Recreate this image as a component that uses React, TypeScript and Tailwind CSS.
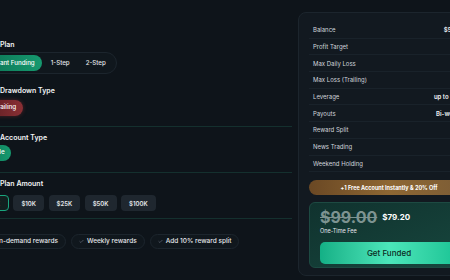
import { Check } from 'lucide-react';

const tabs = ['Instant Funding', '1-Step', '2-Step'];
const amounts = ['$5K', '$10K', '$25K', '$50K', '$100K'];
const rewards = ['On-demand rewards', 'Weekly rewards', 'Add 10% reward split'];

const specs: [string, string][] = [
  ['Balance', '$5,000'],
  ['Profit Target', '8%'],
  ['Max Daily Loss', '4%'],
  ['Max Loss (Trailing)', '6%'],
  ['Leverage', 'up to 1:100'],
  ['Payouts', 'Bi-weekly'],
  ['Reward Split', '80%'],
  ['News Trading', 'Yes'],
  ['Weekend Holding', 'Yes'],
];

const Label = ({ children, className = '' }: { children: string; className?: string }) => (
  <div className={`text-[7px] font-semibold leading-[14px] text-gray-100 ${className}`}>{children}</div>
);

const Divider = ({ className = '' }: { className?: string }) => (
  <div className={`h-px w-[292px] bg-[#14302e] ${className}`} />
);

const App = () => (
  <div className="flex h-[280px] w-[450px] overflow-hidden bg-[#0e141a] font-['Inter',sans-serif]">
    <div className="flex w-[298px] shrink-0 flex-col pt-[38px]">
      <Label>Plan</Label>
      <div className="ml-[-22px] flex h-[22px] w-fit items-center gap-[2px] rounded-full border border-[#1c252d] bg-[#10171d] p-[3px]">
        {tabs.map((t, i) => (
          <div
            key={t}
            className={`flex h-[16px] items-center rounded-full px-[7px] text-[6.2px] font-medium ${
              i === 0 ? 'bg-gradient-to-r from-[#0c7454] to-[#16996f] text-white' : 'text-gray-200'
            }`}
          >
            {t}
          </div>
        ))}
      </div>

      <Label className="mt-[10px]">Drawdown Type</Label>
      <div className="ml-[-13px] mt-[2px] flex h-[16px] w-fit items-center rounded-full bg-gradient-to-r from-[#5e1f23] to-[#8b2f34] px-[7px] text-[6.3px] font-medium text-white shadow-[0_0_4px_rgba(200,60,60,0.35)]">
        Trailing
      </div>

      <Divider className="mt-[10px]" />
      <Label className="mt-[4px]">Account Type</Label>
      <div className="ml-[-20px] flex h-[16px] w-fit items-center rounded-full bg-gradient-to-r from-[#0c7454] to-[#16996f] px-[6px] text-[6.3px] font-medium text-white">
        Single
      </div>

      <Divider className="mt-[11px]" />
      <Label className="mt-[4px]">Plan Amount</Label>
      <div className="ml-[-21px] mt-[4px] flex gap-[4.5px]">
        {amounts.map((a, i) => (
          <div
            key={a}
            className={`flex h-[16px] items-center rounded-[4px] px-[8px] text-[6px] font-semibold ${
              i === 0 ? 'border border-[#1aa57d] bg-[#12201f] text-white' : 'bg-[#1f272f] text-gray-200'
            }`}
          >
            {a}
          </div>
        ))}
      </div>

      <Divider className="mt-[7px]" />
      <div className="ml-[-22px] mt-[15px] flex gap-[5px]">
        {rewards.map((r) => (
          <div
            key={r}
            className="flex h-[15px] items-center gap-[3px] rounded-full border border-[#1c252d] bg-[#10171d] pl-[7px] pr-[7px] text-[6.5px] font-medium text-gray-200"
          >
            <Check className="h-[5px] w-[5px] text-gray-500" strokeWidth={3} />
            {r}
          </div>
        ))}
      </div>
    </div>

    <div className="mt-[12px] flex h-[264px] w-[182px] shrink-0 flex-col rounded-[8px] border border-[#1c252d] bg-[#121920] px-[10px] pt-[9px]">
      {specs.map(([k, v]) => (
        <div key={k} className="flex h-[16.7px] items-center justify-between border-b border-[#19222a] px-[4px] text-[6px]">
          <span className="text-gray-300">{k}</span>
          <span className="font-semibold text-gray-100">{v}</span>
        </div>
      ))}

      <div className="mt-[8px] flex h-[15px] items-center justify-center rounded-full bg-gradient-to-r from-[#6a4824] via-[#8e6733] to-[#7b5c36] text-[5.5px] font-bold text-white">
        +1 Free Account Instantly &amp; 20% Off
      </div>

      <div className="mt-[7px] flex h-[66px] flex-col rounded-[6px] border border-[#1d4a42] bg-gradient-to-br from-[#10322e] to-[#17473e] px-[10px] pt-[4px]">
        <div className="flex items-center gap-[5px]">
          <span className="text-[16px] font-bold leading-[20px] text-[#7d9391] line-through">$99.00</span>
          <span className="text-[8px] font-bold text-white">$79.20</span>
        </div>
        <div className="text-[5.5px] leading-[8px] text-gray-200">One-Time Fee</div>
        <div className="mt-[7px] flex h-[22px] items-center justify-center rounded-[5px] bg-gradient-to-r from-[#13b086] via-[#4be6ba] to-[#18c495] text-[8px] font-medium text-[#0b2a22]">
          Get Funded
        </div>
      </div>
    </div>
  </div>
);

export default App;
